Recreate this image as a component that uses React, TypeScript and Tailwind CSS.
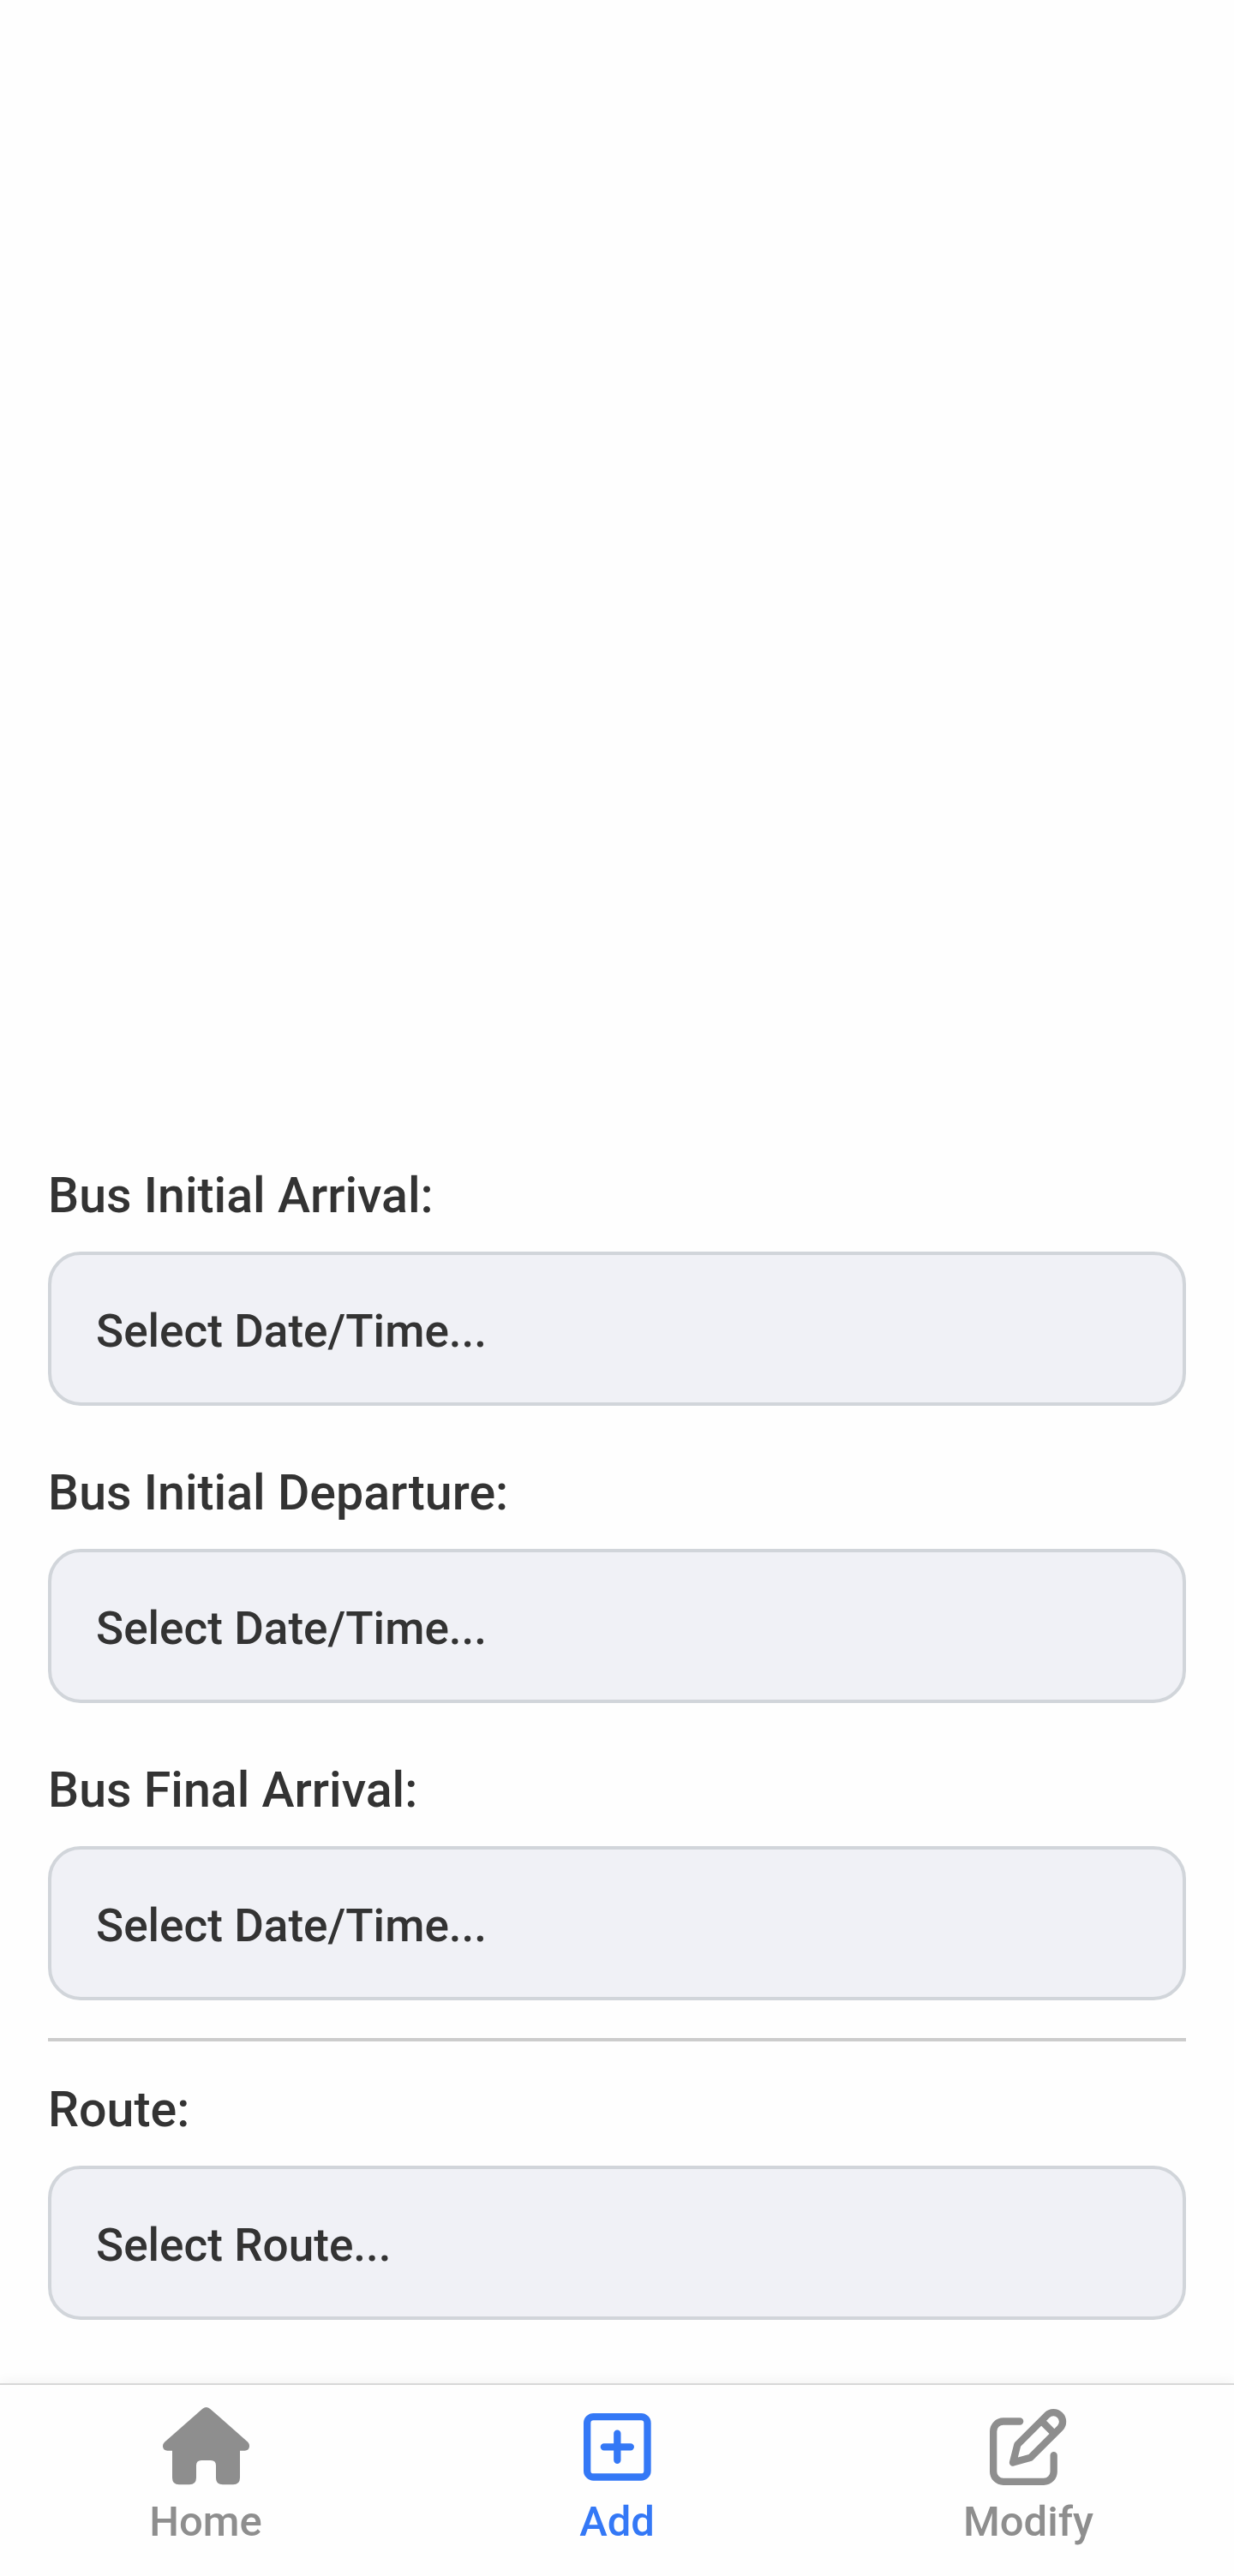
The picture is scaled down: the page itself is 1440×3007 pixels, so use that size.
import type { ReactNode } from 'react';

const HomeIcon = () => (
  <svg viewBox="120 144 360 288" className="h-24 w-[120px]" fill="currentColor">
    <path d="M289 155 Q302 145 315 155 L448 272 Q454 279 453 288 Q451 302 437 302 H420 V397 Q420 421 396 421 H360 Q336 421 336 397 V354 Q336 336 318 336 H285 Q267 336 267 354 V397 Q267 421 243 421 H207 Q183 421 183 397 V302 H166 Q152 302 150 288 Q149 279 156 272 Z" />
  </svg>
);

const AddIcon = () => (
  <svg viewBox="120 144 360 288" className="h-24 w-[120px]" fill="none" stroke="currentColor" strokeWidth="25" strokeLinecap="round">
    <rect x="195.5" y="183.5" width="211" height="211" rx="22" />
    <path d="M254.5 289 H347.5 M301 242 V335.5" />
  </svg>
);

const ModifyIcon = () => (
  <svg viewBox="120 144 360 288" className="h-24 w-[120px]" fill="none" stroke="currentColor" strokeWidth="25" strokeLinecap="round" strokeLinejoin="round">
    <path d="M270.5 199.5 H212.5 A35 35 0 0 0 177.5 234.5 V375.5 A35 35 0 0 0 212.5 410.5 H354 A35 35 0 0 0 389 375.5 V318.5" />
    <path d="M246 343.5 L262 281 L365 178 A32 32 0 0 1 411 223 L308 326 Z" />
    <path d="M346 198 L390 242" strokeLinecap="butt" />
  </svg>
);

const Field = ({ label, value }: { label: string; value: string }) => (
  <div className="flex flex-col gap-[31px]">
    <label className="text-[57.3px] leading-[68px]">{label}</label>
    <button className="flex h-[180px] items-center rounded-[38px] border-4 border-[#d1d5da] bg-[#f0f1f6] px-[52px] pt-1.5 text-left text-[53.1px] leading-[64px]">
      <span>{value}</span>
    </button>
  </div>
);

const Tab = ({ label, color, children }: { label: string; color: string; children: ReactNode }) => (
  <button className={`flex flex-1 flex-col items-center pt-6 ${color}`}>
    {children}
    <span className="mt-[11px] text-[49px] leading-[58px]">{label}</span>
  </button>
);

export default function App() {
  return (
    <div className="flex h-[3007px] w-[1440px] flex-col bg-[#fefefe] font-['Roboto',sans-serif] font-medium text-[#333333]">
      <main className="flex flex-1 flex-col justify-end px-14 pb-[74px]">
        <div className="flex flex-col gap-[68px]">
          <Field label="Bus Initial Arrival:" value="Select Date/Time..." />
          <Field label="Bus Initial Departure:" value="Select Date/Time..." />
          <Field label="Bus Final Arrival:" value="Select Date/Time..." />
        </div>
        <hr className="mt-11 mb-[46px] border-t-4 border-[#cccccc]" />
        <Field label="Route:" value="Select Route..." />
      </main>
      <nav className="flex h-[225px] border-t-2 border-[#d8d8d8] bg-[#fefefe] shadow-[0_-2px_14px_rgba(0,0,0,0.05)]">
        <Tab label="Home" color="text-[#8e8e8e]"><HomeIcon /></Tab>
        <Tab label="Add" color="text-[#3478f6]"><AddIcon /></Tab>
        <Tab label="Modify" color="text-[#8e8e8e]"><ModifyIcon /></Tab>
      </nav>
    </div>
  );
}
